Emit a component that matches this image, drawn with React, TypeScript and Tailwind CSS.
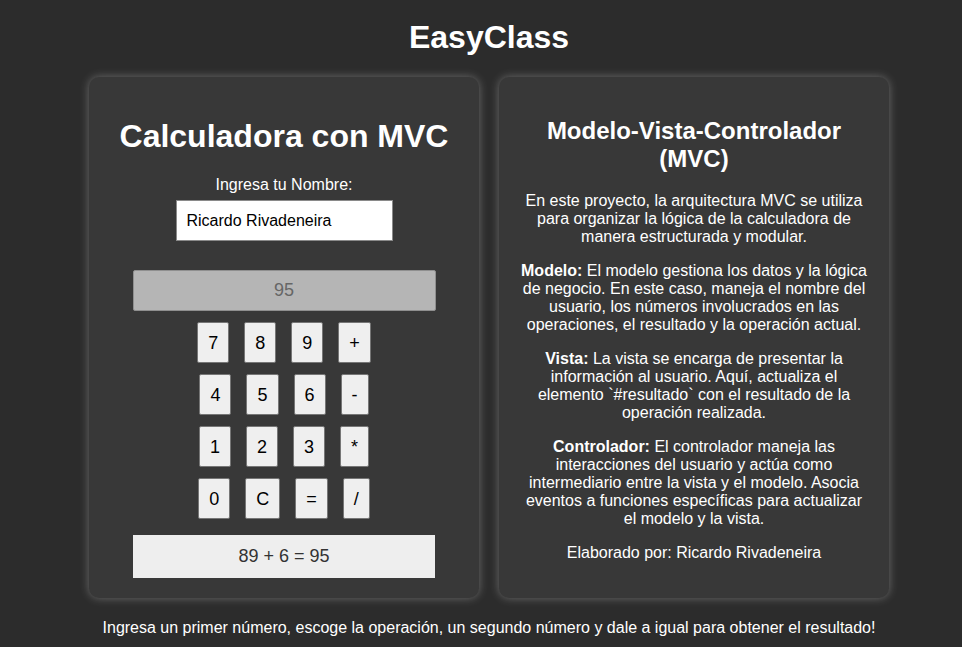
import React from 'react'

const rows: string[][] = [
  ['7', '8', '9', '+'],
  ['4', '5', '6', '-'],
  ['1', '2', '3', '*'],
  ['0', 'C', '=', '/'],
]

function CalcButton({ label }: { label: string }) {
  return (
    <button className="h-[41px] px-[10px] bg-[#efefef] border border-[#767676] rounded-[2px] text-[18px] leading-[20px] text-black">
      {label}
    </button>
  )
}

function CalculatorCard() {
  return (
    <div className="w-[390px] bg-[#383838] rounded-[10px] shadow-[0_0_10px_rgba(255,255,255,0.3)] px-5 pt-5 pb-5 flex flex-col items-center">
      <h1 className="mt-[21px] text-[32px] leading-[37px] font-bold text-white">Calculadora con MVC</h1>
      <label className="mt-[21px] text-[16px] leading-[18px] text-white">Ingresa tu Nombre:</label>
      <input
        className="mt-[6px] w-[217px] h-[41px] bg-white border border-[#8a8a8a] px-[10px] text-[16px] text-black outline-none"
        defaultValue="Ricardo Rivadeneira"
      />
      <div className="mt-[29px] w-[303px] h-[41px] bg-[#b5b5b5] border border-[#8f8f8f] rounded-[2px] flex items-center justify-center text-[18px] text-[#666666]">
        95
      </div>
      <div className="mt-[11px] flex flex-col gap-[11px] items-center">
        {rows.map((row, i) => (
          <div key={i} className="flex gap-[15px]">
            {row.map((b) => (
              <CalcButton key={b} label={b} />
            ))}
          </div>
        ))}
      </div>
      <div className="mt-[16px] w-[302px] h-[43px] bg-[#eeeeee] flex items-center justify-center text-[18px] text-[#333333]">
        89 + 6 = 95
      </div>
    </div>
  )
}

function InfoCard() {
  return (
    <div className="w-[390px] bg-[#383838] rounded-[10px] shadow-[0_0_10px_rgba(255,255,255,0.3)] px-5 pt-5 pb-9 text-center text-white text-[16px] leading-[18px]">
      <h2 className="mt-[20px] text-[24px] leading-[28px] font-bold">Modelo-Vista-Controlador (MVC)</h2>
      <p className="mt-[19px]">
        En este proyecto, la arquitectura MVC se utiliza para organizar la lógica de la calculadora de manera
        estructurada y modular.
      </p>
      <p className="mt-4">
        <strong>Modelo:</strong> El modelo gestiona los datos y la lógica de negocio. En este caso, maneja el nombre
        del usuario, los números involucrados en las operaciones, el resultado y la operación actual.
      </p>
      <p className="mt-4">
        <strong>Vista:</strong> La vista se encarga de presentar la información al usuario. Aquí, actualiza el
        elemento `#resultado` con el resultado de la operación realizada.
      </p>
      <p className="mt-4">
        <strong>Controlador:</strong> El controlador maneja las interacciones del usuario y actúa como intermediario
        entre la vista y el modelo. Asocia eventos a funciones específicas para actualizar el modelo y la vista.
      </p>
      <p className="mt-4">Elaborado por: Ricardo Rivadeneira</p>
    </div>
  )
}

export default function App() {
  return (
    <div className="min-h-[647px] bg-[#2c2c2c] pl-4 pt-[19px] flex flex-col items-center font-['Liberation_Sans',Arial,sans-serif] text-white">
      <h1 className="text-[32px] leading-[37px] font-bold">EasyClass</h1>
      <div className="mt-[21px] flex gap-5 items-stretch">
        <CalculatorCard />
        <InfoCard />
      </div>
      <p className="mt-[21px] text-[16px] leading-[18px]">
        Ingresa un primer número, escoge la operación, un segundo número y dale a igual para obtener el resultado!
      </p>
    </div>
  )
}
